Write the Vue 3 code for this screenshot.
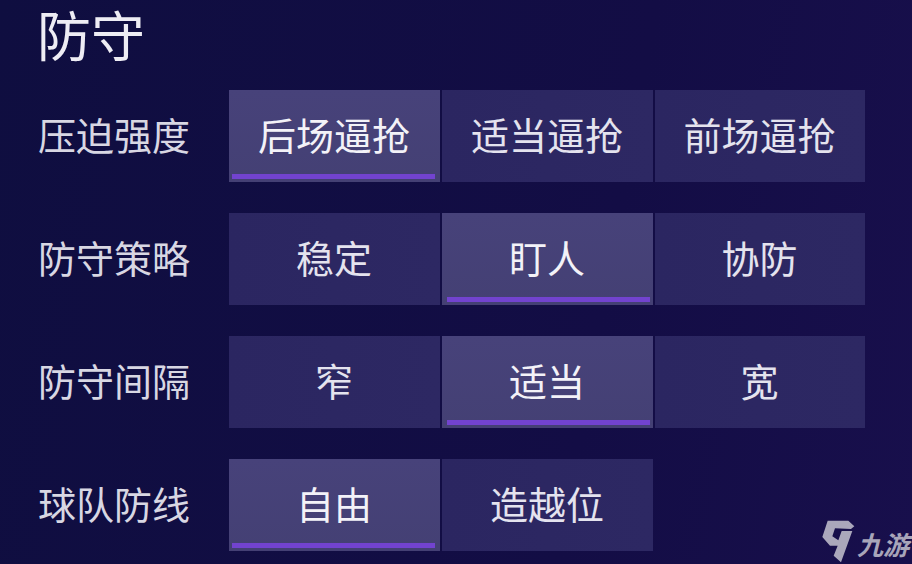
<template>
  <div class="page">
    <h1 class="title">防守</h1>
    <div class="rows">
      <div class="row" v-for="row in rows" :key="row.label">
        <div class="label">{{ row.label }}</div>
        <div class="options">
          <div
              class="option"
              v-for="(opt, index) in row.options"
              :key="opt"
              :class="{active: index === row.active}"
          >
            {{ opt }}
          </div>
        </div>
      </div>
    </div>
    <div class="mark">
      <svg width="35" height="44" viewBox="15 20 105 132">
        <path d="M38 25L100 25L118 42L108 50L60 48L52 72L70 84L80 56L112 56L78 150L56 130L68 100L45 100L22 74Z" fill="#aaa7bb"/>
      </svg>
      <span>九游</span>
    </div>
  </div>
</template>

<script setup>
const rows = [
  {label: "压迫强度", options: ["后场逼抢", "适当逼抢", "前场逼抢"], active: 0},
  {label: "防守策略", options: ["稳定", "盯人", "协防"], active: 1},
  {label: "防守间隔", options: ["窄", "适当", "宽"], active: 1},
  {label: "球队防线", options: ["自由", "造越位"], active: 0},
];
</script>

<style>
html, body {
  margin: 0;
  background: #110e42;
}
</style>

<style scoped>
.page {
  position: relative;
  width: 912px;
  height: 564px;
  box-sizing: border-box;
  padding: 0 0 0 38px;
  overflow: hidden;
  background: linear-gradient(100deg, #0f0e40 0%, #130d45 65%, #180f4c 100%);
  font-family: "Liberation Sans", "Noto Sans CJK SC", sans-serif;
}

.title {
  margin: 0 0 0 -1px;
  height: 90px;
  padding-top: 8px;
  box-sizing: border-box;
  color: #eeedf4;
  font-size: 54px;
  line-height: 60px;
  font-weight: 400;
}

.rows {
  display: flex;
  flex-direction: column;
  gap: 31px;
}

.row {
  display: flex;
  align-items: center;
  height: 92px;
}

.label {
  width: 191px;
  color: #d8d7e3;
  font-size: 38px;
  font-weight: 400;
  padding-bottom: 6px;
}

.options {
  display: flex;
  gap: 2px;
}

.option {
  position: relative;
  width: 211px;
  height: 92px;
  box-sizing: border-box;
  padding: 0 1px 6px 0;
  display: flex;
  align-items: center;
  justify-content: center;
  background: linear-gradient(90deg, #2b2661, #2d2863);
  color: #e4e3ee;
  font-size: 38px;
  font-weight: 400;
}

.option:nth-child(3) {
  width: 210px;
}

.option.active {
  background: linear-gradient(180deg, #47427a, #444074);
  color: #f3f2f8;
}

.option.active::after {
  content: "";
  position: absolute;
  left: 3px;
  right: 5px;
  bottom: 3px;
  height: 5px;
  background: #7243cf;
}

.option.active:nth-child(2)::after {
  left: 5px;
  right: 3px;
}

.mark {
  position: absolute;
  left: 820px;
  bottom: 1px;
  display: flex;
  align-items: flex-end;
  color: #a8a5b9;
}

.mark span {
  margin: 0 0 2px 2px;
  font-size: 26px;
  line-height: 30px;
  font-weight: 700;
  font-style: italic;
  white-space: nowrap;
}
</style>
